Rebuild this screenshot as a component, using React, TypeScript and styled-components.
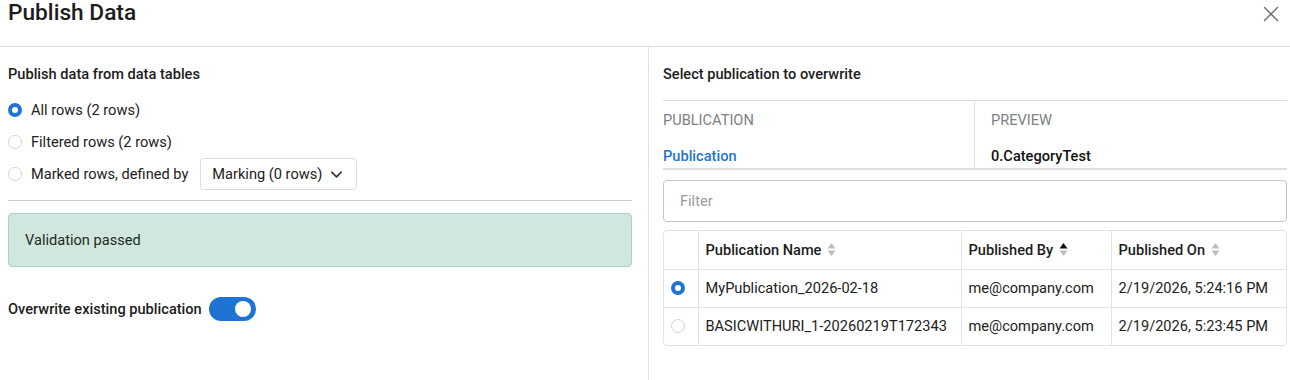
import React from "react";
import styled, { createGlobalStyle } from "styled-components";
import { ChevronDown, X } from "lucide-react";

const Global = createGlobalStyle`
  html, body { margin: 0; padding: 0; background: #fff; }
  body { font-family: Roboto, "Liberation Sans", sans-serif; color: #212121; font-size: 14.6px; }
  * { box-sizing: border-box; }
`;

const Page = styled.div`
  width: 1290px;
  height: 380px;
  overflow: hidden;
  display: flex;
  flex-direction: column;
`;

const Header = styled.div`
  height: 47px;
  border-bottom: 1px solid #dcdcdc;
  display: flex;
  justify-content: space-between;
  align-items: flex-start;
  padding: 0 6px 0 8px;
`;

const Title = styled.h1`
  margin: 0;
  font-size: 22.7px;
  line-height: 26px;
  font-weight: 500;
  color: #1c1c1c;
`;

const CloseButton = styled.button`
  border: 0;
  background: none;
  padding: 0;
  margin: 1px 0 0 0;
  color: #6b6b6b;
  display: flex;
`;

const Body = styled.div`
  flex: 1;
  display: flex;
`;

const LeftPane = styled.div`
  width: 649px;
  padding: 17px 16px 0 8px;
  border-right: 1px solid #e3e3e3;
`;

const RightPane = styled.div`
  flex: 1;
  padding: 17px 3px 0 14px;
`;

const SectionTitle = styled.div`
  line-height: 20px;
  font-weight: 500;
  color: #1c1c1c;
`;

const RadioList = styled.div`
  margin-top: 10px;
  display: flex;
  flex-direction: column;
`;

const RadioRow = styled.label`
  height: 32px;
  display: flex;
  align-items: center;
  gap: 9px;
  color: #212121;
`;

const RadioDot = styled.span<{ $checked?: boolean }>`
  display: block;
  width: 14px;
  height: 14px;
  border-radius: 50%;
  flex: none;
  background: #fff;
  border: ${(p) => (p.$checked ? "4px solid #1f74d3" : "1px solid #d4d4d4")};
`;

const Dropdown = styled.div`
  margin-left: 3px;
  height: 32px;
  width: 157px;
  border: 1px solid #dcdcdc;
  border-radius: 4px;
  display: flex;
  align-items: center;
  gap: 5px;
  padding: 0 0 0 11px;
  color: #212121;
`;

const Divider = styled.hr`
  border: 0;
  border-top: 1px solid #cfcfcf;
  margin: 10px 0 0;
`;

const Alert = styled.div`
  margin-top: 12px;
  height: 54px;
  background: #d1e7dd;
  border: 1px solid #a8d4bf;
  border-radius: 4px;
  display: flex;
  align-items: center;
  padding: 0 16px;
  color: #1c2b24;
`;

const ToggleRow = styled.div`
  margin-top: 30px;
  display: flex;
  align-items: center;
  gap: 7px;
  font-weight: 500;
  color: #1c1c1c;
`;

const Toggle = styled.span<{ $on?: boolean }>`
  width: 47px;
  height: 24px;
  border-radius: 12px;
  background: ${(p) => (p.$on ? "#1f74d3" : "#ccc")};
  display: flex;
  align-items: center;
  justify-content: ${(p) => (p.$on ? "flex-end" : "flex-start")};
  padding: 0 5px;
  &::after {
    content: "";
    width: 16px;
    height: 16px;
    border-radius: 50%;
    background: #fff;
  }
`;

const InfoGrid = styled.div`
  margin-top: 16px;
  display: grid;
  grid-template-columns: 312px 1fr;
  border-top: 1px solid #dedede;
  border-bottom: 2px solid #dcdee2;
`;

const InfoCell = styled.div<{ $first?: boolean }>`
  padding: ${(p) => (p.$first ? "9px 0 2px 0" : "9px 0 2px 16px")};
  border-right: ${(p) => (p.$first ? "1px solid #e0e0e0" : "0")};
  display: flex;
  flex-direction: column;
  gap: 16px;
`;

const InfoLabel = styled.div`
  line-height: 20px;
  color: #7b7f86;
  text-transform: uppercase;
`;

const InfoValue = styled.div<{ $link?: boolean }>`
  line-height: 20px;
  font-weight: 500;
  color: ${(p) => (p.$link ? "#1f74d3" : "#111")};
`;

const FilterInput = styled.input`
  display: block;
  margin-top: 10px;
  width: 100%;
  height: 42px;
  border: 1px solid #c4c4c4;
  border-radius: 4px;
  padding: 0 16px;
  font-family: Roboto, "Liberation Sans", sans-serif;
  font-size: 14.6px;
  color: #212121;
  outline: none;
  &::placeholder { color: #9a9a9a; }
`;

const TableWrap = styled.div`
  margin-top: 8px;
  border: 1px solid #e1e3e6;
  border-radius: 4px;
  overflow: hidden;
`;

const Table = styled.table`
  width: 100%;
  border-collapse: collapse;
  table-layout: fixed;
`;

const Th = styled.th`
  height: 38px;
  text-align: left;
  font-weight: 500;
  color: #1c1c1c;
  padding: 0 7px;
  border-right: 1px solid #e1e3e6;
  border-bottom: 1px solid #e1e3e6;
  white-space: nowrap;
  &:last-child { border-right: 0; }
`;

const Td = styled.td`
  height: 38px;
  padding: 0 7px;
  color: #212121;
  border-right: 1px solid #e1e3e6;
  border-bottom: 1px solid #e1e3e6;
  white-space: nowrap;
  overflow: hidden;
  &:last-child { border-right: 0; }
  tr:last-child > & { border-bottom: 0; }
`;

const HeadInner = styled.span`
  display: inline-flex;
  align-items: center;
  gap: 6px;
`;

const SortIcon = ({ active }: { active?: "asc" | "desc" }) => (
  <svg width="9" height="15" viewBox="0 0 9 15">
    <path d="M4.5 1 L8.5 6.5 L0.5 6.5 Z" fill={active === "asc" ? "#111" : "#bdbdbd"} />
    <path d="M4.5 14 L8.5 8.5 L0.5 8.5 Z" fill={active === "desc" ? "#111" : "#bdbdbd"} />
  </svg>
);

const rows = [
  { name: "MyPublication_2026-02-18", by: "me@company.com", on: "2/19/2026, 5:24:16 PM", sel: true },
  { name: "BASICWITHURI_1-20260219T172343", by: "me@company.com", on: "2/19/2026, 5:23:45 PM", sel: false },
];

export default function App() {
  return (
    <>
      <Global />
      <Page>
        <Header>
          <Title>Publish Data</Title>
          <CloseButton aria-label="Close">
            <X size={26} strokeWidth={1.3} />
          </CloseButton>
        </Header>
        <Body>
          <LeftPane>
            <SectionTitle>Publish data from data tables</SectionTitle>
            <RadioList>
              <RadioRow>
                <RadioDot $checked />
                All rows (2 rows)
              </RadioRow>
              <RadioRow>
                <RadioDot />
                Filtered rows (2 rows)
              </RadioRow>
              <RadioRow>
                <RadioDot />
                Marked rows, defined by
                <Dropdown>
                  Marking (0 rows)
                  <ChevronDown size={19} strokeWidth={2} color="#333" />
                </Dropdown>
              </RadioRow>
            </RadioList>
            <Divider />
            <Alert>Validation passed</Alert>
            <ToggleRow>
              Overwrite existing publication
              <Toggle $on />
            </ToggleRow>
          </LeftPane>
          <RightPane>
            <SectionTitle>Select publication to overwrite</SectionTitle>
            <InfoGrid>
              <InfoCell $first>
                <InfoLabel>Publication</InfoLabel>
                <InfoValue $link>Publication</InfoValue>
              </InfoCell>
              <InfoCell>
                <InfoLabel>Preview</InfoLabel>
                <InfoValue>0.CategoryTest</InfoValue>
              </InfoCell>
            </InfoGrid>
            <FilterInput placeholder="Filter" />
            <TableWrap>
              <Table>
                <colgroup>
                  <col style={{ width: 34 }} />
                  <col style={{ width: 263 }} />
                  <col style={{ width: 150 }} />
                  <col />
                </colgroup>
                <thead>
                  <tr>
                    <Th />
                    <Th>
                      <HeadInner>
                        Publication Name <SortIcon />
                      </HeadInner>
                    </Th>
                    <Th>
                      <HeadInner>
                        Published By <SortIcon active="asc" />
                      </HeadInner>
                    </Th>
                    <Th>
                      <HeadInner>
                        Published On <SortIcon />
                      </HeadInner>
                    </Th>
                  </tr>
                </thead>
                <tbody>
                  {rows.map((r) => (
                    <tr key={r.name}>
                      <Td>
                        <RadioDot $checked={r.sel} />
                      </Td>
                      <Td>{r.name}</Td>
                      <Td>{r.by}</Td>
                      <Td>{r.on}</Td>
                    </tr>
                  ))}
                </tbody>
              </Table>
            </TableWrap>
          </RightPane>
        </Body>
      </Page>
    </>
  );
}
